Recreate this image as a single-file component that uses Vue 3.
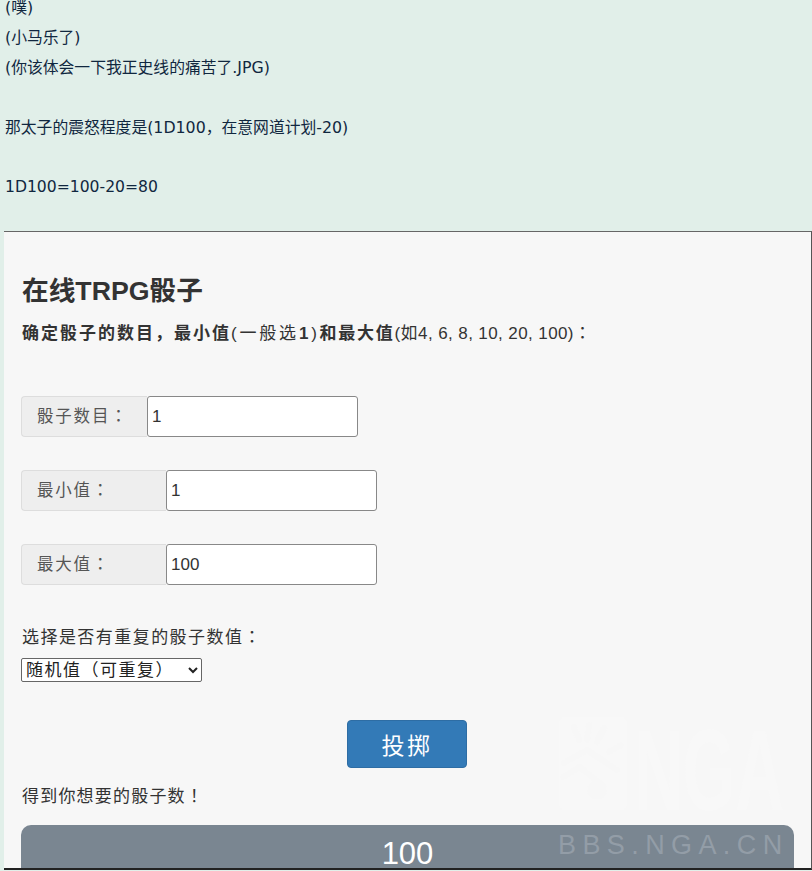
<script setup>
import { ref } from 'vue'

const rows = [
  { label: '骰子数目：', value: '1', cls: 'short' },
  { label: '最小值：', value: '1', cls: 'long' },
  { label: '最大值：', value: '100', cls: 'long' },
]
const mode = ref('repeat')
</script>

<template>
  <div class="page">
    <div class="post">
      <p>(噗)</p>
      <p>(小马乐了)</p>
      <p>(你该体会一下我正史线的痛苦了.JPG)</p>
      <p>&nbsp;</p>
      <p>那太子的震怒程度是(1D100，在意网道计划-20)</p>
      <p>&nbsp;</p>
      <p class="calc">1D100=100-20=80</p>
    </div>
    <div class="shot">
      <h1>在线TRPG骰子</h1>
      <p class="intro"><b class="first">确定骰子的数目，最小值</b><span class="hint">(一般选<b>1</b>)</span><b class="second">和最大值</b><span class="range">(如4, 6, 8, 10, 20, 100)：</span></p>
      <div class="group" v-for="r in rows" :key="r.label" :class="r.cls">
        <span class="addon">{{ r.label }}</span>
        <input class="field" type="text" :value="r.value" />
      </div>
      <p class="pick">选择是否有重复的骰子数值：</p>
      <select class="mode" v-model="mode">
        <option value="repeat">随机值（可重复）</option>
        <option value="once">随机值（不重复）</option>
      </select>
      <div class="actions"><button class="roll" type="button">投掷</button></div>
      <p class="got">得到你想要的骰子数！</p>
      <div class="result">100</div>
      <svg class="logo" width="240" height="120" viewBox="0 0 240 120">
        <rect x="9" y="2" width="68" height="93" rx="6" fill="#f8f8f8" />
        <g stroke="#f7f7f7" stroke-width="6" stroke-linecap="round" fill="none">
          <path d="M24 12 29 25M39 10 37 25M54 13 47 27M71 30 59 37" />
          <path d="M14 48 37 35 67 55M13 62 30 52 52 70" />
        </g>
        <circle cx="47" cy="75" r="10" fill="#f7f7f7" />
        <text transform="translate(84 95) scale(0.587 1)" font-size="115" font-weight="700" fill="#f8f8f8" font-family="Liberation Sans, sans-serif">NGA</text>
      </svg>
      <div class="mark">BBS.NGA.CN</div>
    </div>
  </div>
</template>

<style>
html, body {
  margin: 0;
  background: #e1efe9;
}
</style>

<style scoped>
.page {
  width: 812px;
  height: 871px;
  overflow: hidden;
  background: #e1efe9;
  font-family: "Liberation Sans", "Noto Sans CJK SC", sans-serif;
}
.post {
  height: 238px;
  padding-left: 5px;
  box-sizing: border-box;
  margin-top: -7px;
  color: #10273f;
  font-family: "DejaVu Sans", "Noto Sans CJK SC", sans-serif;
  font-size: 15.8px;
  line-height: 29.9px;
}
.post p {
  margin: 0;
}
.post .calc {
  margin-top: 1px;
  font-size: 15.6px;
}
.shot {
  position: relative;
  box-sizing: border-box;
  margin-left: 4px;
  height: 639px;
  background: #f7f7f7;
  border-top: 1px solid #666;
  border-right: 1px solid #555;
  border-bottom: 2px solid #222;
  padding: 41px 17px 0 17px;
  color: #333;
  overflow: hidden;
}
h1 {
  margin: 0 0 0 1px;
  font-size: 26.7px;
  line-height: 36px;
  font-weight: 700;
}
.intro {
  margin: 13px 0 0 1px;
  font-size: 17px;
  line-height: 24px;
  white-space: nowrap;
}
.first {
  letter-spacing: 2px;
}
.hint {
  letter-spacing: 2.8px;
}
.second {
  letter-spacing: 1.75px;
}
.range {
  letter-spacing: 0.4px;
  font-family: "Liberation Sans", "Noto Sans CJK TC", sans-serif;
}
.group {
  display: flex;
  height: 41px;
  margin-bottom: 33px;
}
.intro + .group {
  margin-top: 50px;
}
.addon {
  box-sizing: border-box;
  padding-left: 15px;
  background: #eee;
  border: 1px solid #ddd;
  border-right: 0;
  border-radius: 4px 0 0 4px;
  font-family: "Liberation Sans", "Noto Sans CJK TC", sans-serif;
  font-size: 16.5px;
  line-height: 39px;
  letter-spacing: 1.8px;
  color: #555;
}
.short .addon {
  width: 126px;
}
.long .addon {
  width: 145px;
}
.field {
  box-sizing: border-box;
  width: 211px;
  height: 41px;
  padding: 0 4px;
  border: 1px solid #888;
  border-radius: 3px;
  background: #fff;
  font-family: inherit;
  font-size: 17px;
  color: #333;
  outline: none;
}
.pick {
  margin: 41px 0 0 1px;
  font-family: "Liberation Sans", "Noto Sans CJK TC", sans-serif;
  font-size: 17px;
  line-height: 24px;
  letter-spacing: 1.45px;
}
.mode {
  display: block;
  box-sizing: border-box;
  width: 181px;
  height: 24px;
  margin-top: 8px;
  font-family: inherit;
  font-size: 17px;
  letter-spacing: 1.5px;
  border: 1px solid #666;
  border-radius: 2px;
  background: #fff;
  color: #222;
}
.actions {
  display: flex;
  justify-content: center;
  margin-top: 38px;
  padding-right: 1px;
}
.roll {
  width: 120px;
  height: 48px;
  border: 1px solid #2e6da4;
  border-radius: 4px;
  background: #337ab7;
  color: #fff;
  font-family: inherit;
  font-size: 23px;
  letter-spacing: 2.5px;
}
.got {
  margin: 17px 0 0 1px;
  font-family: "Liberation Sans", "Noto Sans CJK TC", sans-serif;
  font-size: 17px;
  line-height: 24px;
  letter-spacing: 1.2px;
}
.result {
  margin-top: 16px;
  height: 60px;
  background: #7a8691;
  border-radius: 10px;
  text-align: center;
  color: #fff;
  font-size: 31px;
  line-height: 58px;
}
.logo {
  position: absolute;
  left: 546px;
  top: 483px;
}
.mark {
  position: absolute;
  left: 554px;
  top: 597px;
  font-size: 27px;
  line-height: 32px;
  letter-spacing: 6.4px;
  color: #939da7;
  white-space: nowrap;
}
</style>
